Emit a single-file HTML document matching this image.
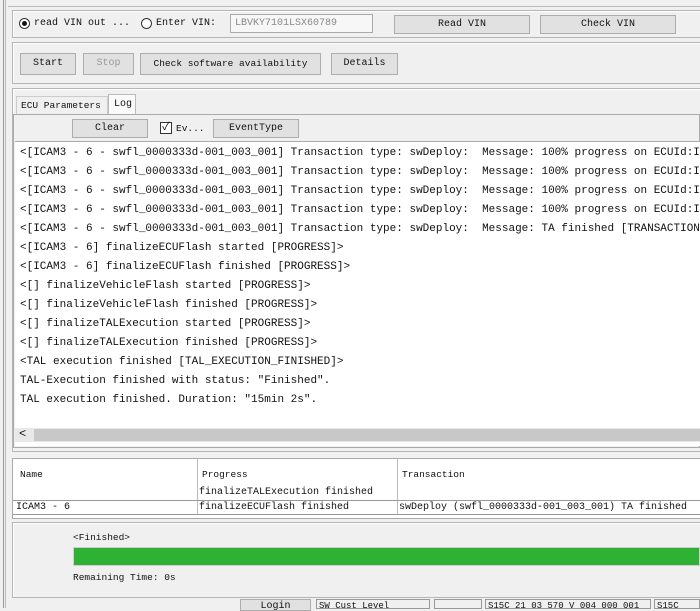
<!DOCTYPE html>
<html><head><meta charset="utf-8"><style>
*{margin:0;padding:0;box-sizing:border-box}
body{width:700px;height:608px;overflow:hidden;background:#f0f0f0;font-family:"Liberation Mono","Noto Sans CJK SC",monospace;font-size:10.5px;color:#111;position:relative}
.a{position:absolute;white-space:nowrap}
.btn{position:absolute;background:#e1e1e1;border:1px solid #adadad;text-align:center;line-height:18px;font-size:10px;white-space:nowrap;overflow:hidden}
.panel{position:absolute;border:1px solid #b5b5b5;box-shadow:inset 1px 1px 0 #fff}
.log div{height:19px;line-height:19px;white-space:pre;font-size:11px}
</style></head><body>
<div class="a" style="left:3px;top:0;width:3px;height:608px;border-left:1px solid #999;border-right:1px solid #bbb"></div>
<div class="a" style="left:8px;top:6px;width:692px;height:1px;background:#bbb"></div>
<div class="panel" style="left:12px;top:10px;width:690px;height:28px;background:#f0f0f0"></div>
<div class="a" style="left:19px;top:18px;width:11px;height:11px;border:1px solid #333;border-radius:50%;background:#fff"><div class="a" style="left:2px;top:2px;width:5px;height:5px;border-radius:50%;background:#111"></div></div>
<div class="a" style="left:34px;top:18px;font-size:10px">read VIN out ...</div>
<div class="a" style="left:141px;top:18px;width:11px;height:11px;border:1px solid #333;border-radius:50%;background:#fff"></div>
<div class="a" style="left:156px;top:18px;font-size:10px">Enter VIN:</div>
<div class="a" style="left:230px;top:14px;width:143px;height:19px;border:1px solid #aaa;background:#f7f7f7;color:#888;padding-left:4px;line-height:17px;font-size:10px">LBVKY7101LSX60789</div>
<div class="btn" style="left:394px;top:15px;width:136px;height:19px">Read VIN</div>
<div class="btn" style="left:540px;top:15px;width:136px;height:19px">Check VIN</div>
<div class="panel" style="left:12px;top:42px;width:690px;height:42px"></div>
<div class="btn" style="left:20px;top:53px;width:56px;height:22px;line-height:20px">Start</div>
<div class="btn" style="left:83px;top:53px;width:51px;height:22px;line-height:20px;color:#999">Stop</div>
<div class="btn" style="left:140px;top:53px;width:181px;height:22px;line-height:20px;font-size:9.5px">Check software availability</div>
<div class="btn" style="left:331px;top:53px;width:67px;height:22px;line-height:20px">Details</div>
<div class="panel" style="left:12px;top:88px;width:690px;height:364px"></div>
<div class="a" style="left:16px;top:96px;width:92px;height:18px;border:1px solid #ccc;border-bottom:none;font-size:9.5px;line-height:18px;padding-left:4px">ECU Parameters</div>
<div class="a" style="left:108px;top:94px;width:28px;height:20px;border:1px solid #bbb;border-bottom:none;background:#fafafa;line-height:20px;padding-left:5px;font-size:10px">Log</div>
<div class="a" style="left:13px;top:114px;width:687px;height:334px;border:1px solid #aaa;background:#f0f0f0"></div>
<div class="btn" style="left:72px;top:119px;width:76px;height:19px">Clear</div>
<div class="a" style="left:160px;top:122px;width:12px;height:12px;border:1px solid #333;background:#fff;font-size:11px;line-height:10px;text-align:center">✓</div>
<div class="a" style="left:176px;top:123px;font-size:9.5px">Ev...</div>
<div class="btn" style="left:213px;top:119px;width:86px;height:19px">EventType</div>
<div class="a" style="left:15px;top:141px;width:685px;height:305px;background:#fff;border-top:1px solid #aaa"></div>
<div class="a log" style="left:20px;top:144px;width:680px;overflow:hidden">
<div>&lt;[ICAM3 - 6 - swfl_0000333d-001_003_001] Transaction type: swDeploy:  Message: 100% progress on ECUId:I</div>
<div>&lt;[ICAM3 - 6 - swfl_0000333d-001_003_001] Transaction type: swDeploy:  Message: 100% progress on ECUId:I</div>
<div>&lt;[ICAM3 - 6 - swfl_0000333d-001_003_001] Transaction type: swDeploy:  Message: 100% progress on ECUId:I</div>
<div>&lt;[ICAM3 - 6 - swfl_0000333d-001_003_001] Transaction type: swDeploy:  Message: 100% progress on ECUId:I</div>
<div>&lt;[ICAM3 - 6 - swfl_0000333d-001_003_001] Transaction type: swDeploy:  Message: TA finished [TRANSACTION</div>
<div>&lt;[ICAM3 - 6] finalizeECUFlash started [PROGRESS]&gt;</div>
<div>&lt;[ICAM3 - 6] finalizeECUFlash finished [PROGRESS]&gt;</div>
<div>&lt;[] finalizeVehicleFlash started [PROGRESS]&gt;</div>
<div>&lt;[] finalizeVehicleFlash finished [PROGRESS]&gt;</div>
<div>&lt;[] finalizeTALExecution started [PROGRESS]&gt;</div>
<div>&lt;[] finalizeTALExecution finished [PROGRESS]&gt;</div>
<div>&lt;TAL execution finished [TAL_EXECUTION_FINISHED]&gt;</div>
<div>TAL-Execution finished with status: "Finished".</div>
<div>TAL execution finished. Duration: "15min 2s".</div>
</div>
<div class="a" style="left:15px;top:428px;width:685px;height:14px;background:#e8e8e8"></div>
<div class="a" style="left:34px;top:429px;width:666px;height:12px;background:#c8c8c8"></div>
<div class="a" style="left:19px;top:427px;font-size:12px">&lt;</div>
<div class="a" style="left:12px;top:458px;width:690px;height:61px;border:1px solid #aaa;background:#fff"></div>
<div class="a" style="left:197px;top:459px;width:1px;height:56px;background:#bbb"></div>
<div class="a" style="left:397px;top:459px;width:1px;height:56px;background:#bbb"></div>
<div class="a" style="left:13px;top:500px;width:687px;height:1px;background:#999"></div>
<div class="a" style="left:13px;top:514px;width:687px;height:1px;background:#999"></div>
<div class="a" style="left:20px;top:469px;font-size:9.5px">Name</div>
<div class="a" style="left:202px;top:469px;font-size:9.5px">Progress</div>
<div class="a" style="left:402px;top:469px;font-size:9.5px">Transaction</div>
<div class="a" style="left:199px;top:487px;font-size:10px">finalizeTALExecution finished</div>
<div class="a" style="left:16px;top:502px;font-size:10px">ICAM3 - 6</div>
<div class="a" style="left:199px;top:502px;font-size:10px">finalizeECUFlash finished</div>
<div class="a" style="left:399px;top:502px;font-size:10px">swDeploy (swfl_0000333d-001_003_001) TA finished</div>
<div class="panel" style="left:12px;top:522px;width:690px;height:76px"></div>
<div class="a" style="left:73px;top:532px;font-size:9.5px">&lt;Finished&gt;</div>
<div class="a" style="left:73px;top:547px;width:627px;height:19px;background:#2fb234;border:1px solid #cfcfcf"></div>
<div class="a" style="left:73px;top:572px;font-size:9.5px">Remaining Time:  0s</div>
<div class="btn" style="left:240px;top:599px;width:71px;height:12px;line-height:14px">Login</div>
<div class="a" style="left:316px;top:599px;width:114px;height:10px;border:1px solid #999;font-size:9px;line-height:12px;overflow:hidden;padding-left:2px">SW Cust Level</div>
<div class="a" style="left:434px;top:599px;width:48px;height:10px;border:1px solid #999"></div>
<div class="a" style="left:485px;top:599px;width:166px;height:10px;border:1px solid #999;font-size:9px;line-height:12px;overflow:hidden;padding-left:2px">S15C_21_03_570_V_004_000_001</div>
<div class="a" style="left:654px;top:599px;width:46px;height:10px;border:1px solid #999;font-size:9px;line-height:12px;overflow:hidden;padding-left:2px">S15C</div>
</body></html>
